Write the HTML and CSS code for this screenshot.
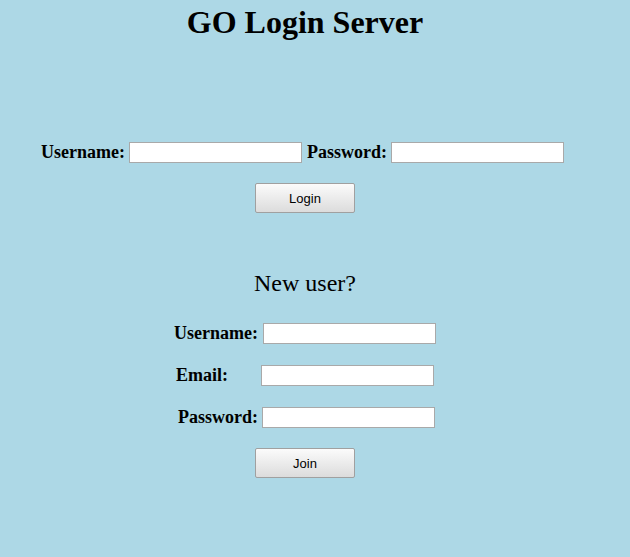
FILE: index.html
```html
<!DOCTYPE html>
<html>
<head>
<meta charset="utf-8">
<title>GO Login Server</title>
<link rel="stylesheet" href="styles.css">
</head>
<body>
<div class="page">
  <h1 class="title">GO Login Server</h1>
  <form class="login">
    <div class="login-row">
      <label class="lbl">Username:</label>
      <input class="field" type="text">
      <label class="lbl lbl-pass">Password:</label>
      <input class="field" type="password">
    </div>
    <button class="btn" type="button">Login</button>
  </form>
  <h2 class="newuser">New user?</h2>
  <form class="register">
    <div class="reg-row">
      <label class="lbl">Username:</label>
      <input class="field" type="text">
    </div>
    <div class="reg-row">
      <label class="lbl lbl-email">Email:</label>
      <input class="field" type="text">
    </div>
    <div class="reg-row reg-pass">
      <label class="lbl">Password:</label>
      <input class="field" type="password">
    </div>
    <button class="btn btn-join" type="button">Join</button>
  </form>
</div>
</body>
</html>
```
FILE: styles.css
```css
html, body {
  margin: 0;
  padding: 0;
  background: #add8e6;
  height: 100%;
}
body {
  font-family: "Liberation Serif", "Times New Roman", serif;
  color: #000;
}
.page {
  width: 610px;
  display: flex;
  flex-direction: column;
  align-items: center;
}
.title {
  margin: 0;
  padding-top: 4px;
  font-size: 32px;
  line-height: 37px;
  font-weight: bold;
}
.login {
  display: flex;
  flex-direction: column;
  align-items: center;
  margin-top: 101px;
}
.login-row, .reg-row {
  display: flex;
  align-items: center;
  height: 21px;
}
.login-row {
  margin-right: 5px;
}
.lbl {
  font-size: 18px;
  font-weight: bold;
  margin-right: 4px;
}
.lbl-pass {
  margin-left: 5px;
}
.field {
  box-sizing: border-box;
  width: 173px;
  height: 21px;
  margin: 0;
  padding: 1px 2px;
  border: 1px solid #a9a9a9;
  background: #fff;
  font-size: 13px;
}
.btn {
  box-sizing: border-box;
  width: 100px;
  height: 30px;
  margin-top: 20px;
  border: 1px solid #a0a0a0;
  border-radius: 2px;
  background: linear-gradient(#fbfbfb, #dcdcdc);
  font-family: "Liberation Sans", Arial, sans-serif;
  font-size: 13px;
  color: #000;
  padding: 0;
}
.newuser {
  margin: 56px 0 0;
  font-size: 24px;
  line-height: 28px;
  font-weight: normal;
}
.register {
  display: flex;
  flex-direction: column;
  align-items: center;
  margin-top: 26px;
}
.reg-row + .reg-row {
  margin-top: 21px;
}
.reg-row .lbl {
  margin-right: 5px;
}
.reg-row .lbl-email {
  margin-right: 33px;
}
.reg-pass {
  margin-left: 3px;
}
.reg-pass .lbl {
  margin-right: 4px;
}
.btn-join {
  margin-top: 20px;
}
```
